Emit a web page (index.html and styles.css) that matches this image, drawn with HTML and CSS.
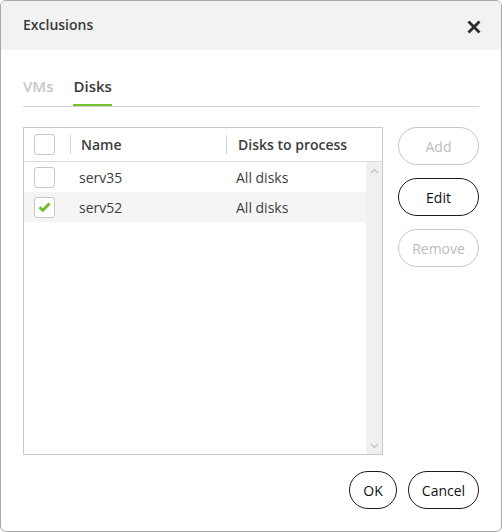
FILE: index.html
```html
<!DOCTYPE html>
<html>
<head>
<meta charset="utf-8">
<link rel="stylesheet" href="styles.css">
</head>
<body>
<div class="dialog">
  <div class="header">
    <span class="title">Exclusions</span>
    <svg class="close" width="14" height="14" viewBox="0 0 14 14"><path d="M1.5 1.5L12.5 12.5M12.5 1.5L1.5 12.5" stroke="#2b2b2b" stroke-width="2.8" stroke-linecap="butt"/></svg>
  </div>
  <div class="tabs">
    <span class="tab">VMs</span>
    <span class="tab active">Disks</span>
  </div>
  <div class="content">
    <div class="table">
      <div class="thead">
        <div class="cell-check"><span class="cb"></span></div>
        <div class="sep"></div>
        <div class="col-name th">Name</div>
        <div class="sep"></div>
        <div class="col-disks th">Disks to process</div>
      </div>
      <div class="tbody">
        <div class="rows">
          <div class="row">
            <div class="cell-check"><span class="cb"></span></div>
            <div class="col-name td">serv35</div>
            <div class="col-disks td">All disks</div>
          </div>
          <div class="row selected">
            <div class="cell-check"><span class="cb"><svg width="13" height="10" viewBox="0 0 13 10"><path d="M1.5 5.2L4.8 8.3L11.5 1.5" fill="none" stroke="#6cc024" stroke-width="2.8"/></svg></span></div>
            <div class="col-name td">serv52</div>
            <div class="col-disks td">All disks</div>
          </div>
        </div>
        <div class="scrollbar">
          <svg width="9" height="6" viewBox="0 0 9 6"><path d="M1 5L4.5 1.5L8 5" fill="none" stroke="#c4c4c4" stroke-width="1.4"/></svg>
          <svg width="9" height="6" viewBox="0 0 9 6"><path d="M1 1L4.5 4.5L8 1" fill="none" stroke="#c4c4c4" stroke-width="1.4"/></svg>
        </div>
      </div>
    </div>
    <div class="side">
      <button class="btn disabled">Add</button>
      <button class="btn">Edit</button>
      <button class="btn disabled">Remove</button>
    </div>
  </div>
  <div class="footer">
    <button class="btn ok">OK</button>
    <button class="btn cancel">Cancel</button>
  </div>
</div>
</body>
</html>
```
FILE: styles.css
```css
html, body { margin: 0; padding: 0; background: #ffffff; }
body { font-family: "Open Sans", "Noto Sans", sans-serif; font-size: 14px; color: #333; }
.dialog {
  width: 502px; height: 532px; box-sizing: border-box;
  border: 1px solid #a9a9a9; border-radius: 6px; overflow: hidden;
  background: #fff; display: flex; flex-direction: column;
}
.header {
  height: 49px; background: #f2f2f2; display: flex; align-items: center;
  justify-content: space-between; padding: 0 20px 0 22px; flex-shrink: 0;
}
.title { font-size: 14px; font-weight: 600; color: #3a3a3a; margin-top: -3px; }
.close { margin-top: 3px; }
.tabs {
  margin: 22px 22px 0 22px; height: 35px; border-bottom: 1px solid #cfcfcf;
  display: flex; gap: 20px; box-sizing: border-box;
}
.tab { font-size: 15px; font-weight: 600; color: #c6c6c6; padding-top: 4px; height: 100%; box-sizing: border-box; }
.tab.active { color: #3a3a3a; border-bottom: 2px solid #76c22d; }
.content { display: flex; gap: 15px; margin: 20px 22px 0 22px; }
.table {
  width: 360px; height: 328px; box-sizing: border-box; border: 1px solid #c9c9c9;
  display: flex; flex-direction: column;
}
.thead { height: 34px; display: flex; align-items: center; border-bottom: 1px solid #dcdcdc; flex-shrink: 0; box-sizing: border-box; }
.cell-check { width: 46px; display: flex; justify-content: flex-start; padding-left: 10px; box-sizing: border-box; flex-shrink: 0; }
.cb {
  width: 21px; height: 21px; box-sizing: border-box; border: 1px solid #c8c8c8; border-radius: 3px;
  background: #fff; display: flex; align-items: center; justify-content: center;
}
.sep { width: 1px; height: 19px; background: #d4d4d4; flex-shrink: 0; }
.th { font-weight: 600; color: #3d3d3d; }
.thead .col-name { width: 155px; padding-left: 10px; box-sizing: border-box; }
.thead .col-disks { padding-left: 11px; }
.tbody { flex: 1; display: flex; }
.rows { flex: 1; }
.row { height: 30px; display: flex; align-items: center; }
.row.selected { background: #f5f5f5; }
.row .col-name { width: 166px; padding-left: 9px; box-sizing: border-box; }
.td { color: #3d3d3d; }
.scrollbar {
  width: 16px; background: #f0f0f0; display: flex; flex-direction: column;
  justify-content: space-between; align-items: center; padding: 6px 0 5px; box-sizing: border-box;
}
.side { display: flex; flex-direction: column; gap: 13px; }
.btn {
  font-family: "Open Sans", "Noto Sans", sans-serif; font-size: 14px; color: #111;
  background: #fff; border: 1px solid #1a1a1a; border-radius: 19px; height: 38px;
  padding: 0; cursor: pointer;
}
.side .btn { width: 81px; }
.btn.disabled { border-color: #c8c8c8; color: #bdbdbd; }
.footer { display: flex; justify-content: flex-end; gap: 11px; margin: 16px 22px 0 0; }
.btn.ok { width: 48px; }
.btn.cancel { width: 71px; }
```
